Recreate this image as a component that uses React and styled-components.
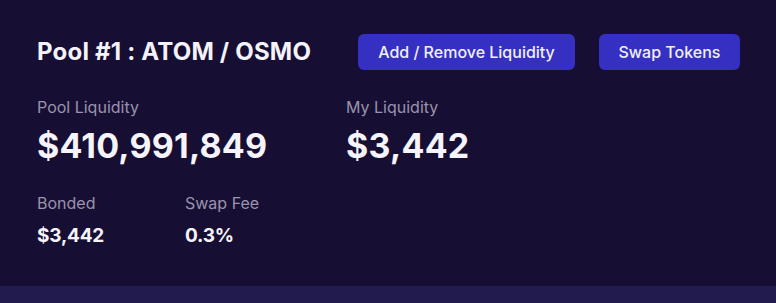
import React from "react";
import styled, { createGlobalStyle } from "styled-components";

const Global = createGlobalStyle`
  html, body { margin: 0; padding: 0; background: #170f33; }
  body { font-family: "Inter", "Liberation Sans", sans-serif; }
`;

const Page = styled.div`
  width: 776px;
  height: 303px;
  display: flex;
  flex-direction: column;
  background: #170f33;
  overflow: hidden;
`;

const Card = styled.section`
  height: 286px;
  box-sizing: border-box;
  padding: 34px 36px 0 37px;
  display: flex;
  flex-direction: column;
`;

const Strip = styled.div`
  flex: 1;
  background: #221b4d;
`;

const Header = styled.div`
  display: flex;
  align-items: center;
  justify-content: space-between;
  height: 36px;
`;

const Title = styled.h1`
  margin: 0;
  font-family: "Inter", sans-serif;
  font-weight: 700;
  font-size: 24px;
  line-height: 30px;
  letter-spacing: 0.2px;
  color: #f4f2fa;
`;

const Actions = styled.div`
  display: flex;
  gap: 24px;
`;

const Button = styled.button`
  height: 36px;
  width: ${(p) => p.$w}px;
  border: none;
  border-radius: 6px;
  background: #3530c1;
  color: #f1f0fb;
  font-family: "Inter", sans-serif;
  font-weight: 500;
  font-size: 16px;
  padding: 0;
  cursor: pointer;
`;

const Row = styled.div`
  display: grid;
  grid-template-columns: ${(p) => p.$cols};
  margin-top: ${(p) => p.$mt}px;
`;

const Stat = styled.div`
  display: flex;
  flex-direction: column;
`;

const Label = styled.span`
  font-family: "Inter", sans-serif;
  font-size: 16px;
  line-height: 18px;
  color: #9a93ad;
`;

const BigValue = styled.span`
  font-family: "Inter", sans-serif;
  font-weight: 700;
  font-size: 34px;
  line-height: 44px;
  letter-spacing: 0.2px;
  margin-top: 8px;
  color: #f6f4fb;
`;

const SmallValue = styled.span`
  font-family: "Inter", sans-serif;
  font-weight: 700;
  font-size: 19px;
  line-height: 22px;
  letter-spacing: -0.2px;
  margin-top: 13px;
  color: #f6f4fb;
`;

export default function App() {
  return (
    <>
      <Global />
      <Page>
        <Card>
          <Header>
            <Title>Pool #1 : ATOM / OSMO</Title>
            <Actions>
              <Button $w={217}>Add / Remove Liquidity</Button>
              <Button $w={141}>Swap Tokens</Button>
            </Actions>
          </Header>
          <Row $cols="309px 1fr" $mt={28}>
            <Stat>
              <Label>Pool Liquidity</Label>
              <BigValue>$410,991,849</BigValue>
            </Stat>
            <Stat>
              <Label>My Liquidity</Label>
              <BigValue>$3,442</BigValue>
            </Stat>
          </Row>
          <Row $cols="148px 1fr" $mt={26}>
            <Stat>
              <Label>Bonded</Label>
              <SmallValue>$3,442</SmallValue>
            </Stat>
            <Stat>
              <Label>Swap Fee</Label>
              <SmallValue>0.3%</SmallValue>
            </Stat>
          </Row>
        </Card>
        <Strip />
      </Page>
    </>
  );
}
